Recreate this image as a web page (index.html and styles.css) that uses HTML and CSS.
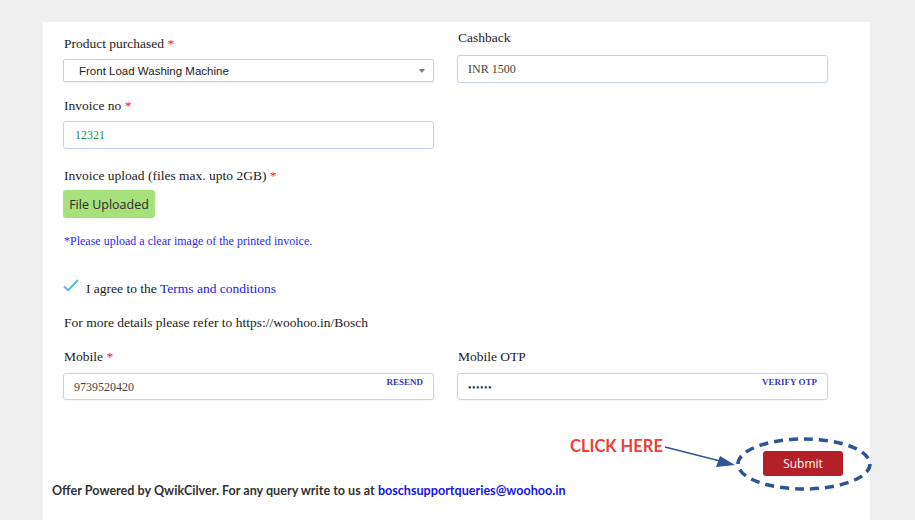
FILE: index.html
```html
<!DOCTYPE html>
<html>
<head>
<meta charset="utf-8">
<link rel="stylesheet" href="styles.css">
</head>
<body>
<div class="card">
  <div class="form">
    <div class="row-top">
      <div class="col col-left">
        <div class="label">Product purchased <span class="req">*</span></div>
        <div class="select">
          <span>Front Load Washing Machine</span>
          <span class="caret"></span>
        </div>
        <div class="label label-gap">Invoice no <span class="req">*</span></div>
        <div class="input input-green">12321</div>
      </div>
      <div class="col">
        <div class="label">Cashback</div>
        <div class="input input-tall">INR 1500</div>
      </div>
    </div>

    <div class="label upload-label">Invoice upload (files max. upto 2GB) <span class="req">*</span></div>
    <div class="upload-btn">File Uploaded</div>
    <div class="note">*Please upload a clear image of the printed invoice.</div>

    <div class="agree">
      <svg class="check" width="16" height="13" viewBox="0 0 16 13"><path d="M1 7.5 L5.2 11.2 L15 1" fill="none" stroke="#5ab3e2" stroke-width="2"/></svg>
      <span>I agree to the <span class="link">Terms and conditions</span></span>
    </div>
    <div class="label details">For more details please refer to https://woohoo.in/Bosch</div>

    <div class="row-mobile">
      <div class="col">
        <div class="label">Mobile <span class="req">*</span></div>
        <div class="input input-otp"><span class="val">9739520420</span><span class="action">RESEND</span></div>
      </div>
      <div class="col">
        <div class="label">Mobile OTP</div>
        <div class="input input-otp"><span class="val dots">••••••</span><span class="action">VERIFY OTP</span></div>
      </div>
    </div>

    <div class="submit-row">
      <div class="submit">Submit</div>
    </div>
  </div>
  <div class="footer">Offer Powered by QwikCilver. For any query write to us at <span class="mail">boschsupportqueries@woohoo.in</span></div>

  <div class="click-here">CLICK HERE</div>
  <svg class="annot" width="340" height="80" viewBox="0 0 340 80">
    <line x1="115" y1="17" x2="170" y2="31" stroke="#2f5597" stroke-width="1.3"/>
    <polygon points="185,35 166,37 170,26" fill="#2f5597"/>
    <ellipse cx="254" cy="34" rx="66" ry="25" fill="none" stroke="#2f5597" stroke-width="3.5" stroke-dasharray="9 6"/>
  </svg>
</div>
</body>
</html>
```
FILE: styles.css
```css
html, body {
  margin: 0;
  padding: 0;
}
body {
  background: #efefef;
  font-family: "Liberation Serif", "Times New Roman", serif;
  color: #222;
  min-height: 520px;
}
.card {
  position: relative;
  margin-left: 43px;
  margin-top: 22px;
  width: 827px;
  min-height: 498px;
  background: #fff;
  box-sizing: border-box;
}
.form {
  padding: 6px 20px 0 20px;
}
.row-top, .row-mobile {
  display: grid;
  grid-template-columns: 371px 371px;
  column-gap: 23px;
  align-items: start;
}
.col {
  display: flex;
  flex-direction: column;
}
.col-left {
  padding-top: 6px;
}
.label {
  font-size: 13.5px;
  line-height: 20px;
  color: #222;
  padding-left: 1px;
}
.req {
  color: #e8141c;
}
.label + .select, .label + .input {
  margin-top: 5px;
}
.select {
  height: 23px;
  box-sizing: border-box;
  border: 1px solid #cfcfcf;
  border-radius: 2px;
  display: flex;
  align-items: center;
  justify-content: space-between;
  padding: 0 8px 0 15px;
  font-family: "Liberation Sans", Arial, sans-serif;
  font-size: 11.5px;
  color: #222;
  box-shadow: 0 1px 2px rgba(0,0,0,0.08);
}
.caret {
  width: 0;
  height: 0;
  border-left: 3.5px solid transparent;
  border-right: 3.5px solid transparent;
  border-top: 4px solid #777;
}
.input {
  box-sizing: border-box;
  height: 28px;
  border: 1px solid #c8d4ea;
  border-radius: 3px;
  padding: 0 10px;
  display: flex;
  align-items: center;
  font-size: 12px;
  color: #444;
  box-shadow: 0 0 2px rgba(150,170,210,0.25);
}
.label + .input-tall {
  margin-top: 7px;
}
.input-green {
  color: #2c8a3c;
  padding-left: 11px;
}
.label-gap {
  margin-top: 14px;
}
.upload-label {
  margin-top: 17px;
}
.upload-btn {
  margin-top: 4px;
  width: 92px;
  height: 28px;
  box-sizing: border-box;
  background: #a6e17c;
  border-radius: 3px;
  font-family: "Open Sans", "Noto Sans", sans-serif;
  font-size: 12.5px;
  color: #2a2a2a;
  display: flex;
  align-items: center;
  justify-content: center;
}
.note {
  margin-top: 15px;
  font-size: 12px;
  line-height: 16px;
  color: #2b2bf0;
  padding-left: 1px;
}
.agree {
  margin-top: 30px;
  display: flex;
  align-items: center;
  height: 20px;
  font-size: 13.5px;
  color: #222;
}
.check {
  margin-right: 7px;
  margin-top: -7px;
}
.link {
  color: #2222e6;
}
.details {
  margin-top: 14px;
}
.row-mobile {
  margin-top: 14px;
}
.row-mobile .input-otp {
  height: 27px;
  margin-top: 6px;
  justify-content: space-between;
  align-items: stretch;
  padding-right: 10px;
}
.input-otp .val {
  align-self: center;
  padding-top: 1px;
}
.input-otp .dots {
  font-size: 10px;
  letter-spacing: 0.5px;
  color: #333;
}
.action {
  font-size: 9px;
  font-weight: bold;
  color: #3a3ab0;
  padding-top: 3px;
}
.submit-row {
  margin-top: 51px;
  display: flex;
  justify-content: flex-end;
  padding-right: 7px;
}
.submit {
  width: 80px;
  height: 25px;
  background: #b51f28;
  border-radius: 3px;
  color: #fff;
  font-family: "Open Sans", "Noto Sans", sans-serif;
  font-size: 12px;
  display: flex;
  align-items: center;
  justify-content: center;
}
.footer {
  margin-top: 7px;
  padding-left: 9px;
  font-family: Lato, "Liberation Sans", sans-serif;
  font-weight: bold;
  font-size: 12.6px;
  line-height: 16px;
  color: #333;
}
.mail {
  color: #1414e6;
}
.click-here {
  position: absolute;
  left: 527px;
  top: 414px;
  font-family: Lato, "Liberation Sans", sans-serif;
  font-weight: bold;
  font-size: 16.5px;
  color: #f23d36;
  line-height: 20px;
}
.annot {
  position: absolute;
  left: 507px;
  top: 408px;
}
```
